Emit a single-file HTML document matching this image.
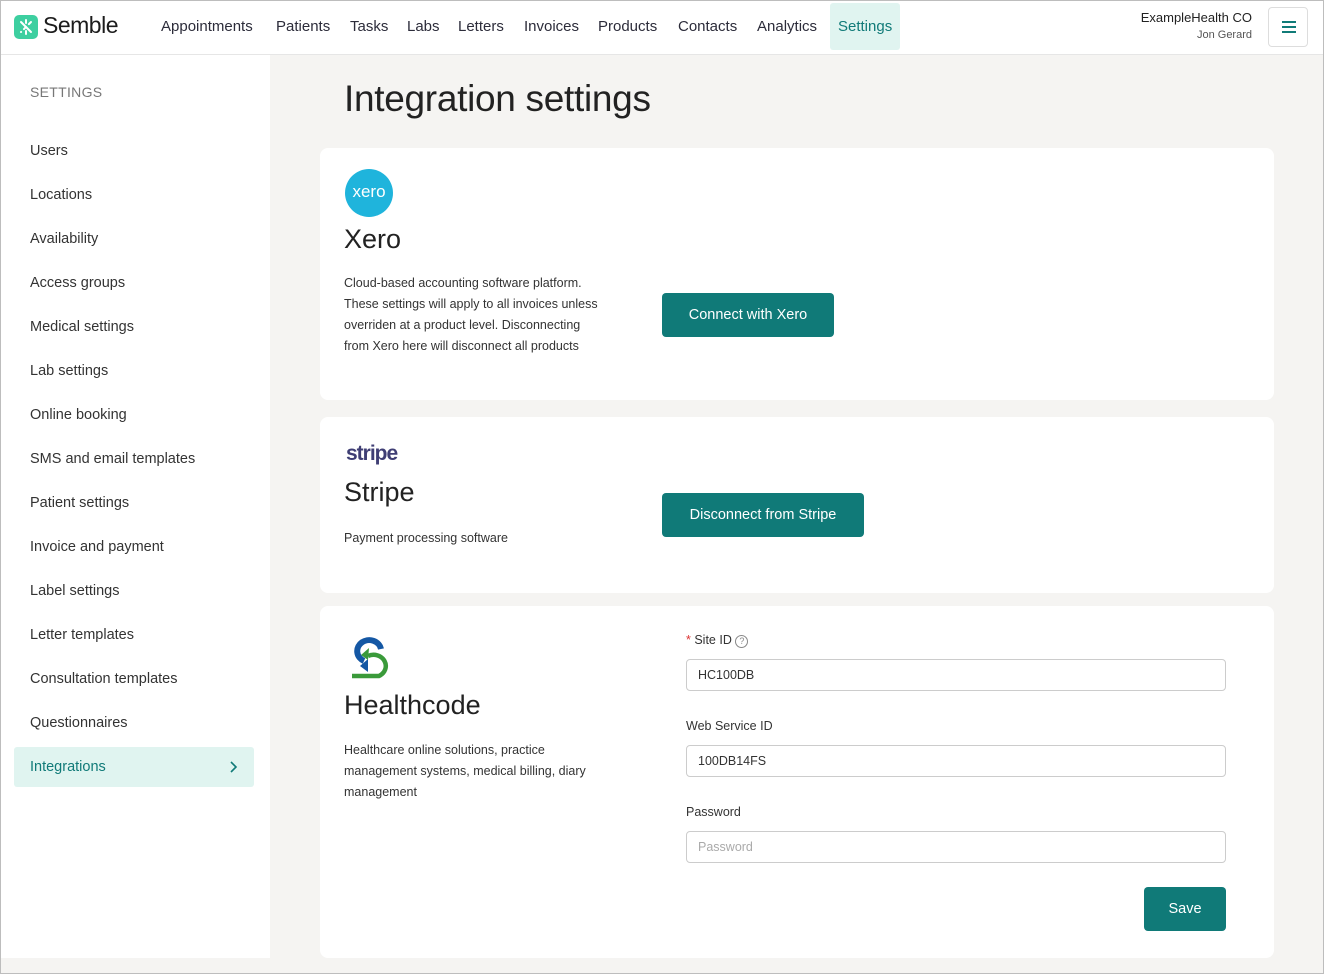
<!DOCTYPE html>
<html><head><meta charset="utf-8"><style>
*{box-sizing:border-box;margin:0;padding:0}
html,body{width:1324px;height:974px;overflow:hidden}
body{font-family:"Liberation Sans",sans-serif;background:#f5f4f2;color:#222;position:relative}
.frame{position:absolute;left:0;top:0;width:1324px;height:974px;border:1px solid #bdbdbd;z-index:9;pointer-events:none}
.hdr{position:absolute;left:0;top:0;width:1324px;height:55px;background:#fff;border-bottom:1px solid #e6e6e6}
.logo{position:absolute;left:14px;top:15px;width:24px;height:24px;background:#3dcfa0;border-radius:5px}
.brand{position:absolute;left:43px;top:12px;font-size:23px;color:#1c1c1c;letter-spacing:-0.5px}
.nav{position:absolute;top:3px;height:47px;line-height:47px;font-size:15px;color:#2c2c3a;padding:0 8px}
.nav.act{background:#e0f4f0;color:#107a78;border-radius:3px}
.org{position:absolute;right:72px;top:10px;text-align:right;font-size:13px;color:#222}
.org small{display:block;font-size:11px;color:#555;margin-top:4px}
.menu{position:absolute;left:1268px;top:7px;width:40px;height:40px;border:1px solid #ddd;border-radius:4px}
.menu i{position:absolute;left:13px;width:14px;height:2px;background:#117b78}
.side{position:absolute;left:0;top:55px;width:270px;height:903px;background:#fff}
.side .t{position:absolute;left:30px;top:29px;font-size:14px;color:#777;letter-spacing:.3px}
.side .it{position:absolute;left:30px;font-size:14.5px;color:#333}
.side .sel{position:absolute;left:14px;top:692px;width:240px;height:40px;background:#e0f4f0;border-radius:3px}
h1{position:absolute;left:344px;top:78px;font-size:37px;font-weight:normal;color:#222;letter-spacing:-0.3px}
.card{position:absolute;left:320px;width:954px;background:#fff;border-radius:8px}
.card h2{position:absolute;left:24px;font-size:27px;font-weight:normal;color:#222}
.card p{position:absolute;left:24px;font-size:12.5px;line-height:21px;color:#333;width:270px}
.btn{position:absolute;background:#107a78;color:#fff;font-size:14.5px;border-radius:4px;text-align:center}
.lbl{position:absolute;left:366px;font-size:12.5px;color:#333}
.inp{position:absolute;left:366px;width:540px;height:32px;border:1px solid #ccc;border-radius:4px;font-size:12.5px;padding:0 11px;line-height:30px;color:#333}
</style></head><body>
<div class="frame"></div>
<div class="hdr">
<div class="logo"><svg width="24" height="24" viewBox="0 0 24 24"><g stroke="#fff" stroke-width="2" stroke-linecap="round"><line x1="12" y1="5" x2="12" y2="8"/><line x1="12" y1="16" x2="12" y2="19"/><line x1="7" y1="7" x2="17" y2="17"/><line x1="17" y1="7" x2="7" y2="17" stroke-dasharray="3 4"/></g></svg></div>
<div class="brand">Semble</div>
<div class="nav" style="left:153px">Appointments</div>
<div class="nav" style="left:268px">Patients</div>
<div class="nav" style="left:342px">Tasks</div>
<div class="nav" style="left:399px">Labs</div>
<div class="nav" style="left:450px">Letters</div>
<div class="nav" style="left:516px">Invoices</div>
<div class="nav" style="left:590px">Products</div>
<div class="nav" style="left:670px">Contacts</div>
<div class="nav" style="left:749px">Analytics</div>
<div class="nav act" style="left:830px;width:70px">Settings</div>
<div class="org">ExampleHealth CO<small>Jon Gerard</small></div>
<div class="menu"><i style="top:13px"></i><i style="top:18px"></i><i style="top:23px"></i></div>
</div>
<div class="side">
<div class="t">SETTINGS</div>
<div class="it" style="top:88px">Users</div>
<div class="it" style="top:132px">Locations</div>
<div class="it" style="top:176px">Availability</div>
<div class="it" style="top:220px">Access groups</div>
<div class="it" style="top:264px">Medical settings</div>
<div class="it" style="top:308px">Lab settings</div>
<div class="it" style="top:352px">Online booking</div>
<div class="it" style="top:396px">SMS and email templates</div>
<div class="it" style="top:440px">Patient settings</div>
<div class="it" style="top:484px">Invoice and payment</div>
<div class="it" style="top:528px">Label settings</div>
<div class="it" style="top:572px">Letter templates</div>
<div class="it" style="top:616px">Consultation templates</div>
<div class="it" style="top:660px">Questionnaires</div>
<div class="sel"></div>
<div class="it" style="top:704px;color:#107a78">Integrations</div>
<svg style="position:absolute;left:227px;top:705px" width="12" height="14" viewBox="0 0 12 14"><path d="M4 2l5 5-5 5" fill="none" stroke="#107a78" stroke-width="1.6"/></svg>
</div>
<h1>Integration settings</h1>
<div class="card" style="top:148px;height:252px">
<div style="position:absolute;left:25px;top:21px;width:48px;height:48px;border-radius:50%;background:#1fb4dc;color:#fff;font-size:17px;text-align:center;line-height:46px">xero</div>
<h2 style="top:76px">Xero</h2>
<p style="top:125px;width:262px">Cloud-based accounting software platform. These settings will apply to all invoices unless overriden at a product level. Disconnecting from Xero here will disconnect all products</p>
<div class="btn" style="left:342px;top:145px;width:172px;height:44px;line-height:44px">Connect with Xero</div>
</div>
<div class="card" style="top:417px;height:176px">
<div style="position:absolute;left:26px;top:25px;font-size:21px;font-weight:bold;color:#3f3e74;letter-spacing:-1px">stripe</div>
<h2 style="top:60px">Stripe</h2>
<p style="top:111px">Payment processing software</p>
<div class="btn" style="left:342px;top:76px;width:202px;height:44px;line-height:44px">Disconnect from Stripe</div>
</div>
<div class="card" style="top:606px;height:352px">
<svg style="position:absolute;left:29px;top:30px" width="44" height="44" viewBox="0 0 44 44"><path d="M32 13 A12 11 0 1 0 15 25" fill="none" stroke="#1457a4" stroke-width="6"/><path d="M11 30 l8-7 0 13z" fill="#1457a4"/><path d="M19 20 A11 10 0 1 1 30 40 L3 40" fill="none" stroke="#3a9a3a" stroke-width="4.5"/><path d="M20 12 l-8 7 7 5z" fill="#3a9a3a"/></svg>
<h2 style="top:84px">Healthcode</h2>
<p style="top:134px;width:265px">Healthcare online solutions, practice management systems, medical billing, diary management</p>
<div class="lbl" style="top:27px"><span style="color:#d33">*</span> Site ID <span style="display:inline-block;width:13px;height:13px;border:1px solid #888;border-radius:50%;font-size:9px;text-align:center;line-height:11px;color:#888">?</span></div>
<div class="inp" style="top:53px">HC100DB</div>
<div class="lbl" style="top:113px">Web Service ID</div>
<div class="inp" style="top:139px">100DB14FS</div>
<div class="lbl" style="top:199px">Password</div>
<div class="inp" style="top:225px;color:#aaa">Password</div>
<div class="btn" style="left:824px;top:281px;width:82px;height:44px;line-height:44px">Save</div>
</div>
</body></html>
